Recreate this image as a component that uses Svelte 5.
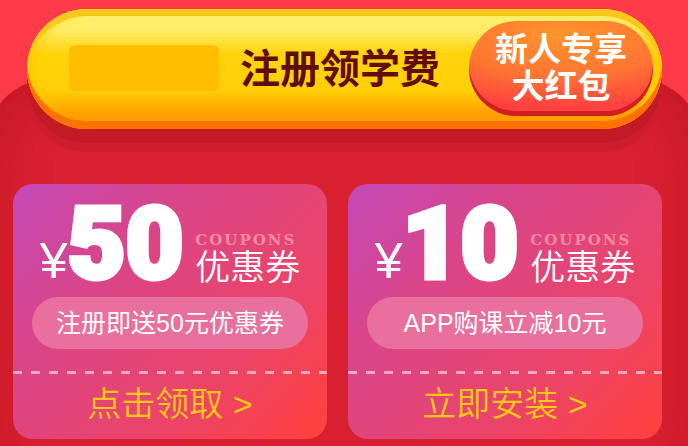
<script>
  const coupons = [
    { amount: 50, desc: '注册即送50元优惠券', action: '点击领取 >', href: '#register' },
    { amount: 10, desc: 'APP购课立减10元', action: '立即安装 >', href: '#install' }
  ];
</script>

<main class="promo">
  <header class="banner">
    <span class="brand"></span>
    <h1>注册领学费</h1>
    <button class="gift" type="button">新人专享<br />大红包</button>
  </header>

  <section class="coupons">
    {#each coupons as coupon}
      <article class="coupon">
        <div class="price">
          <span class="symbol">¥</span>
          <strong class="amount">{coupon.amount}</strong>
          <div class="label">
            <span class="label-en">COUPONS</span>
            <span class="label-cn">优惠券</span>
          </div>
        </div>
        <p class="desc">{coupon.desc}</p>
        <div class="divider"></div>
        <a class="action" href={coupon.href}>{coupon.action}</a>
      </article>
    {/each}
  </section>
</main>

<style>
  :global(body) {
    background: #ff3b4a;
    font-family: 'Liberation Sans', 'Noto Sans CJK SC', sans-serif;
  }

  .promo {
    position: relative;
    z-index: 0;
    box-sizing: border-box;
    min-height: 100vh;
    padding: 9px 26px 7px 13px;
    overflow: hidden;
  }

  /* dark red sheet behind the coupons */
  .promo::before {
    content: '';
    position: absolute;
    z-index: -1;
    inset: 80px -12px -60px;
    border-radius: 60px;
    background: #d92031;
    box-shadow: inset 0 0 60px #bd1521;
  }

  .banner {
    display: flex;
    align-items: center;
    box-sizing: border-box;
    height: 120px;
    margin-left: 14px;
    padding: 0 9px 2px 42px;
    border-radius: 60px;
    background: linear-gradient(#fff06c 6%, #ffec66 18%, #ffd30a 38%, #ffcf08 68%, #ffa200 86%, #ff9800);
    box-shadow:
      inset 0 7px 0 #ffc71c,
      inset 0 -8px 0 #ff7200,
      inset 12px 0 16px -8px #ffc800,
      inset -12px 0 16px -8px #ffc800,
      0 14px 0 #c41a26,
      0 23px 0 #cf1d2c;
  }

  .brand {
    width: 150px;
    height: 46px;
    border-radius: 6px;
    background: #ffbf00;
  }

  h1 {
    margin: 0 0 4px 21px;
    font-family: 'Noto Sans CJK SC', sans-serif;
    font-size: 40px;
    font-weight: 700;
    line-height: 48px;
    white-space: nowrap;
    color: #610d0c;
  }

  .gift {
    box-sizing: border-box;
    width: 184px;
    height: 95px;
    margin-left: auto;
    padding: 0 0 5px;
    border: none;
    border-radius: 48px;
    background: radial-gradient(ellipse 120% 85% at 50% 15%, #ff942c, #ff7533 50%, #ff4040 90%);
    box-shadow: inset 0 -5px 0 #d41f22;
    font-family: 'Noto Sans CJK SC', sans-serif;
    font-size: 33px;
    font-weight: 700;
    line-height: 37px;
    color: #fff;
    cursor: pointer;
  }

  .coupons {
    display: grid;
    grid-template-columns: 1fr 1fr;
    gap: 21px;
    margin-top: 55px;
  }

  .coupon {
    display: flex;
    flex-direction: column;
    border-radius: 20px;
    background: linear-gradient(135deg, #c449b8, #da4588 32%, #ec4468 70%, #ff4040 97%);
    color: #fff;
  }

  .price {
    display: flex;
    justify-content: center;
    align-items: flex-end;
    height: 99px;
    padding-top: 16px;
    box-sizing: border-box;
    line-height: 1;
  }

  .symbol {
    font-size: 50px;
    line-height: 44px;
  }

  .amount {
    font-family: Impact, Roboto, sans-serif;
    font-size: 100px;
    font-weight: 900;
    line-height: 78px;
    -webkit-text-stroke: 5px #fff;
  }

  .label {
    display: flex;
    flex-direction: column;
    margin-left: 12px;
  }

  .label-en {
    font-family: 'DejaVu Serif', serif;
    font-size: 15px;
    font-weight: 700;
    line-height: 14px;
    letter-spacing: 2px;
    color: #f28aa4;
  }

  .label-cn {
    font-family: 'Noto Sans CJK SC', sans-serif;
    font-size: 35px;
    font-weight: 350;
    line-height: 36px;
  }

  .desc {
    margin: 14px 19px 22px;
    border-radius: 26px;
    background: #e9709d;
    font-size: 25px;
    line-height: 52px;
    text-align: center;
    white-space: nowrap;
  }

  .divider {
    height: 3px;
    background: repeating-linear-gradient(90deg, #ffa8be 0 9px, transparent 9px 18px);
  }

  .action {
    padding: 4px 0 9px;
    font-size: 34px;
    font-weight: 350;
    line-height: 52px;
    text-align: center;
    text-decoration: none;
    color: #ffc815;
  }
</style>
